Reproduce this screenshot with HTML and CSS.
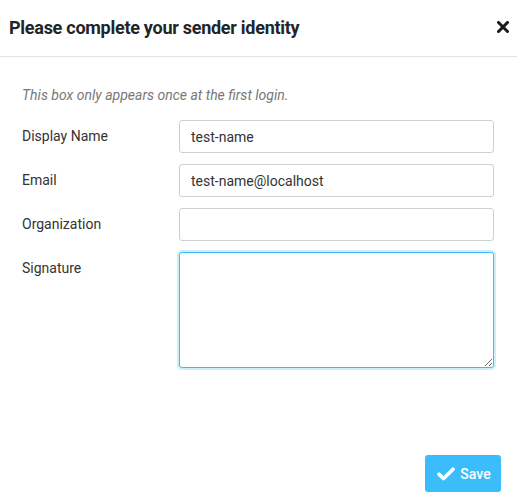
FILE: index.html
```html
<!DOCTYPE html>
<html>
<head>
<meta charset="utf-8">
<link rel="stylesheet" href="styles.css">
</head>
<body>
<div class="modal">
  <div class="modal-header">
    <h1 class="modal-title">Please complete your sender identity</h1>
    <svg class="close" width="12" height="12" viewBox="0 0 12 12" aria-label="close"><path d="M1.5 1.5 L10.5 10.5 M10.5 1.5 L1.5 10.5" stroke="#1a1a1a" stroke-width="3" stroke-linecap="square"/></svg>
  </div>
  <div class="modal-body">
    <p class="note">This box only appears once at the first login.</p>
    <div class="row">
      <label class="label">Display Name</label>
      <input class="field" type="text" value="test-name">
    </div>
    <div class="row">
      <label class="label">Email</label>
      <input class="field" type="text" value="test-name@localhost">
    </div>
    <div class="row">
      <label class="label">Organization</label>
      <input class="field" type="text" value="">
    </div>
    <div class="row">
      <label class="label">Signature</label>
      <textarea class="field area focused"></textarea>
    </div>
  </div>
  <div class="modal-footer">
    <button class="btn-save">
      <svg class="check" width="18" height="14" viewBox="0 0 18 14"><path d="M2 7.2 L6.6 11.6 L16 2.2" fill="none" stroke="#fff" stroke-width="3.6" stroke-linecap="round" stroke-linejoin="round"/></svg>
      <span>Save</span>
    </button>
  </div>
</div>
</body>
</html>
```
FILE: styles.css
```css
* { box-sizing: border-box; }
html, body { margin: 0; padding: 0; background: #fff; }
body { font-family: Roboto, "Noto Sans", sans-serif; color: #333; font-size: 14px; }
.modal { width: 517px; height: 500px; display: flex; flex-direction: column; }
.modal-header {
  height: 57px;
  border-bottom: 1px solid #e2e2e2;
  display: flex;
  align-items: center;
  justify-content: space-between;
  padding: 0 8px 1px 9px;
}
.modal-title { margin: 0; font-size: 18px; font-weight: 700; color: #212529; letter-spacing: -0.27px; }
.close { display: block; margin-top: -1px; }
.modal-body { padding: 28px 23px 0 22px; flex: 1; }
.note { margin: 0 0 15px; font-style: italic; color: #777; font-size: 14px; line-height: 20px; }
.row { display: flex; align-items: flex-start; margin-bottom: 11px; }
.label { width: 157px; padding-top: 7px; line-height: 18px; color: #333; font-size: 14px; }
.field {
  flex: 1;
  height: 33px;
  border: 1px solid #ccd0d5;
  border-radius: 3px;
  padding: 0 11px;
  font-family: Roboto, "Noto Sans", sans-serif;
  font-size: 14px;
  color: #333;
  background: #fff;
  outline: none;
}
.area { height: 116px; resize: vertical; }
.focused { border: 1px solid #3cbcf8; box-shadow: 0 0 0 2px #cdeefd; }
.modal-footer { display: flex; justify-content: flex-end; padding: 0 16px 8px 0; }
.btn-save {
  width: 76px;
  height: 37px;
  background: #3bbdfb;
  border: none;
  border-radius: 3px;
  color: #fff;
  font-family: Roboto, "Noto Sans", sans-serif;
  font-size: 14px;
  font-weight: 500;
  display: flex;
  align-items: center;
  justify-content: center;
  gap: 5px;
  padding: 0 0 0 2px;
}
.check { display: block; }
```
